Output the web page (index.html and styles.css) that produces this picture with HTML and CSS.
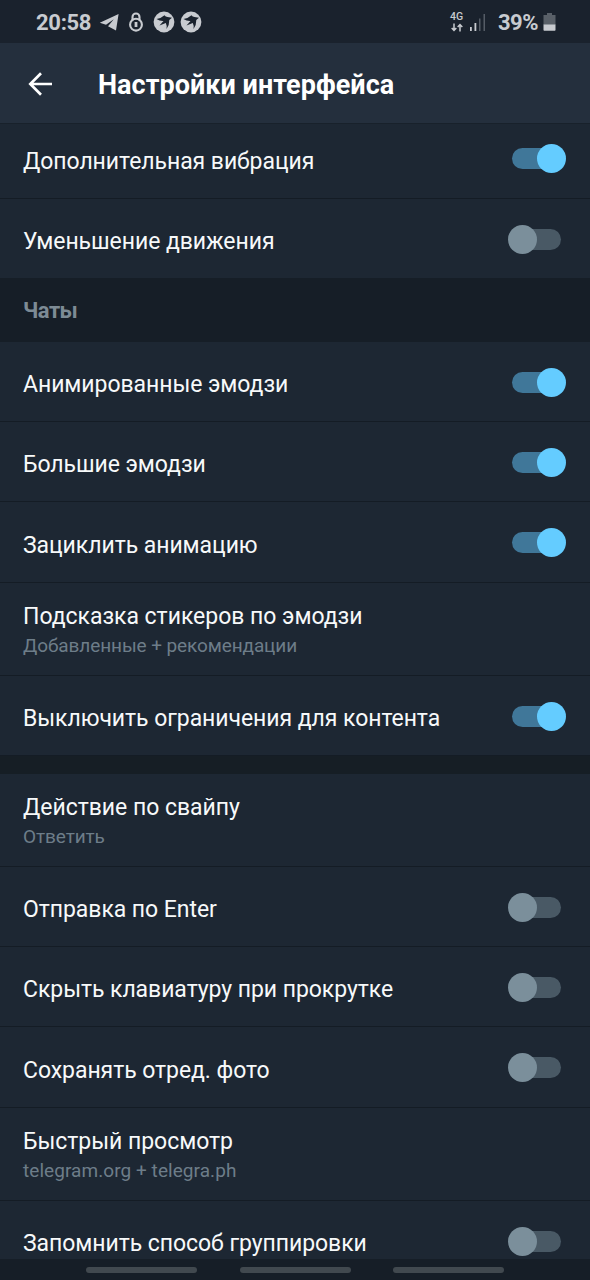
FILE: index.html
```html
<!DOCTYPE html>
<html lang="ru">
<head>
<meta charset="utf-8">
<title>Настройки интерфейса</title>
<link rel="stylesheet" href="styles.css">
</head>
<body>
<div class="screen">
  <div class="status">
    <span class="clock">20:58</span>
    <svg class="plane" width="21" height="19" viewBox="0 0 21 19"><path d="M.8 9.800 19.600 1 17 17.600 9 13.200 14.800 6.200 7 11.800Z" fill="currentColor"/></svg>
    <svg class="lock" width="16" height="20" viewBox="0 0 16 20"><path d="M4.500 8.500V5a3.500 3.500 0 0 1 7 0v3.500" fill="none" stroke="currentColor" stroke-width="2.1"/><circle cx="8" cy="12.700" r="5.900" fill="none" stroke="currentColor" stroke-width="2.1"/><path d="M6.600 10h2.800v5H6.600z" fill="currentColor"/></svg>
    <svg class="bird" width="22" height="22" viewBox="0 0 22 22"><circle cx="11" cy="11" r="10.4" fill="currentColor"/><path class="cut" d="M3.500 8Q8 7.500 11.500 4.300 12.500 6 14.500 6L19 6.800 16.300 9Q16.500 14 13.500 18 14 14 12.800 12L6.500 14.500 10.500 10Q7 10.300 3.500 8Z"/></svg>
    <svg class="bird" width="22" height="22" viewBox="0 0 22 22"><circle cx="11" cy="11" r="10.4" fill="currentColor"/><path class="cut" d="M3.500 8Q8 7.500 11.500 4.300 12.500 6 14.500 6L19 6.800 16.300 9Q16.500 14 13.500 18 14 14 12.800 12L6.500 14.500 10.500 10Q7 10.300 3.500 8Z"/></svg>
    <div class="network"><span>4G</span>
      <svg width="12" height="9" viewBox="0 0 12 9"><path d="M3 .5V7M.7 5 3 7.5 5.3 5M9 8.5V2M6.7 4 9 1.5 11.3 4" fill="none" stroke="currentColor" stroke-width="1.5"/></svg>
    </div>
    <svg class="signal" width="16" height="17" viewBox="0 0 16 17"><path d="M0 13h1.800v4H0zM4.500 9h1.800v8H4.500z" fill="currentColor"/><path d="M9 4.500h1.500V17H9zM13.500 0h1.500v17h-1.500z" fill="#555c66"/></svg>
    <span class="percent">39%</span>
    <svg class="battery" width="13" height="18" viewBox="0 0 13 18"><path d="M4 0h5v2h3.500v10H.5V2H4z" fill="#596068"/><path d="M.5 11.500h12V17q0 .7-.7.7H1.200Q.5 17.700.5 17z" fill="currentColor"/></svg>
  </div>
  <header class="bar">
    <svg class="back" width="26" height="26" viewBox="0 0 26 26"><path d="M25 13H3M14 2.300 3.300 13 14 23.700" fill="none" stroke="currentColor" stroke-width="2.7"/></svg>
    <h1>Настройки интерфейса</h1>
  </header>
  <main class="list">
    <div class="row first"><span class="label">Дополнительная вибрация</span><i class="switch on"></i></div>
    <div class="row last"><span class="label">Уменьшение движения</span><i class="switch"></i></div>
    <h2>Чаты</h2>
    <div class="row"><span class="label">Анимированные эмодзи</span><i class="switch on"></i></div>
    <div class="row"><span class="label">Большие эмодзи</span><i class="switch on"></i></div>
    <div class="row tall"><span class="label">Зациклить анимацию</span><i class="switch on"></i></div>
    <div class="row double"><span class="label">Подсказка стикеров по эмодзи</span><span class="value">Добавленные + рекомендации</span></div>
    <div class="row"><span class="label">Выключить ограничения для контента</span><i class="switch on"></i></div>
    <div class="gap"></div>
    <div class="row double"><span class="label">Действие по свайпу</span><span class="value">Ответить</span></div>
    <div class="row"><span class="label">Отправка по Enter</span><i class="switch"></i></div>
    <div class="row"><span class="label">Скрыть клавиатуру при прокрутке</span><i class="switch"></i></div>
    <div class="row tall"><span class="label">Сохранять отред. фото</span><i class="switch"></i></div>
    <div class="row double"><span class="label">Быстрый просмотр</span><span class="value latin">telegram.org + telegra.ph</span></div>
    <div class="row"><span class="label">Запомнить способ группировки</span><i class="switch"></i></div>
  </main>
  <nav class="gestures"><i></i><i></i><i></i></nav>
</div>
</body>
</html>
```
FILE: styles.css
```css
* { box-sizing: border-box; }
body { margin: 0; background: #1d2733; font-family: Roboto, "Noto Sans", sans-serif; }
.screen { width: 590px; height: 1280px; display: flex; flex-direction: column; overflow: hidden; }
svg { display: block; flex: none; }

.status { height: 43px; flex: none; display: flex; align-items: center; padding: 1px 34px 0 36px; background: #1a222d; color: #c8cbd0; }
.clock { width: 55px; font-size: 22px; font-weight: 700; letter-spacing: -.3px; white-space: nowrap; }
.plane { margin-left: 8px; }
.lock { margin-left: 8px; }
.bird { margin-left: 9px; }
.bird + .bird { margin-left: 5px; }
.cut { fill: #1a222d; }
.network { width: 15px; margin-left: auto; margin-right: 1px; display: flex; flex-direction: column; align-items: center; font-size: 10.500px; line-height: 10px; font-weight: 500; }
.network svg { margin-top: 1px; }
.signal { margin-left: 5px; margin-top: 1px; }
.percent { width: 42px; margin-left: 12px; font-size: 22px; font-weight: 700; letter-spacing: -.5px; white-space: nowrap; }
.battery { margin-left: 3px; }

.bar { height: 81px; flex: none; display: flex; align-items: center; padding-left: 27px; background: #242f3d; border-bottom: 1px solid #18212b; color: #fff; }
.back { margin-top: 2px; }
.bar h1 { margin: 3px 0 0 45px; font-size: 27px; line-height: 32px; font-weight: 700; letter-spacing: .03px; white-space: nowrap; }

.list { height: 1135px; flex: none; overflow: hidden; color: #f7f9fa; }
.row { height: 80px; display: flex; align-items: center; justify-content: space-between; padding: 1px 24px 0 23px; border-bottom: 1px solid #141c25; background: #1d2733; }
.row.first { height: 75px; padding-bottom: 6px; }
.row.last { height: 79px; border-bottom: 0; }
.row.tall { height: 81px; }
.row.double { height: 93px; flex-direction: column; align-items: flex-start; justify-content: flex-start; padding-top: 20px; }
.label { padding-top: 5px; font-size: 23px; line-height: 27px; letter-spacing: -.06px; white-space: nowrap; }
.double .label { padding-top: 0; letter-spacing: -.03px; }
.value { margin-top: 5px; font-size: 19px; line-height: 22px; letter-spacing: -.1px; color: #6d7d89; white-space: nowrap; }
.value.latin { letter-spacing: .06px; }
.list h2 { height: 64px; margin: 0; padding: 20px 23px; background: #161e27; color: #7d8b95; font-size: 22px; line-height: 26px; font-weight: 700; letter-spacing: -.5px; }
.gap { height: 18px; background: #161e25; }

.switch { position: relative; width: 49px; height: 21px; margin-right: 5px; border-radius: 11px; background: #495965; }
.switch::after { content: ""; position: absolute; left: -4px; top: -4px; width: 29px; height: 29px; border-radius: 50%; background: #7b8f9b; }
.switch.on { background: #407799; }
.switch.on::after { left: 25px; background: #64ccff; }

.gestures { height: 21px; flex: none; display: flex; justify-content: space-between; padding: 8px 86px 0; background: #161e27; }
.gestures i { width: 111px; height: 6px; border-radius: 3px; background: #41494f; }
```
